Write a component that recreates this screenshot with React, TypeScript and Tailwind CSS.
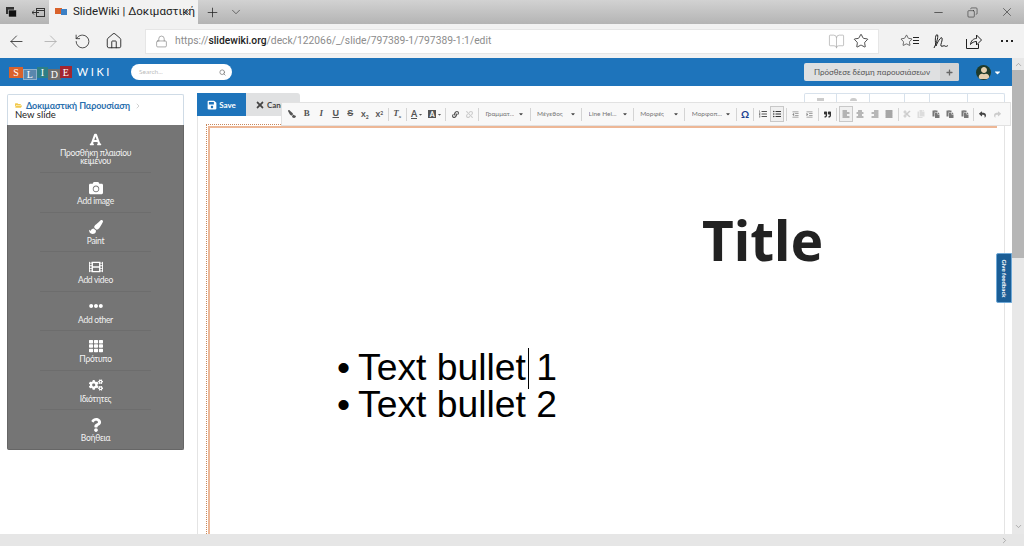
import React from "react";
import { ArrowLeft, ArrowRight, RotateCw, Home, Lock, BookOpen, Star, X, Plus, ChevronDown, Minus, Copy, Search, ChevronRight } from "lucide-react";
import { FaFont, FaCamera, FaPaintBrush, FaFilm, FaEllipsisH, FaTh, FaCogs, FaQuestion, FaSave, FaTimes, FaFolderOpen, FaPlus, FaCaretDown, FaLink, FaUnlink, FaListOl, FaListUl, FaOutdent, FaIndent, FaQuoteRight, FaAlignLeft, FaAlignCenter, FaAlignRight, FaAlignJustify, FaCut, FaCopy, FaPaste, FaReply, FaShare, FaUser } from "react-icons/fa";

const lato = { fontFamily: "Lato, sans-serif" };

function Sep() {
  return <div className="w-[3.6px] flex justify-center shrink-0"><div className="w-px h-[13px] bg-[#d4d4d4]" /></div>;
}

function Btn({ children, boxed, w }: { children: React.ReactNode; boxed?: boolean; w?: string }) {
  return (
    <div className={`${w ?? "w-[14.5px]"} h-[16px] shrink-0 flex items-center justify-center text-[#555] text-[9px] ${boxed ? "border border-[#c8c8c8] bg-[#f0f0f0]" : ""}`}>
      {children}
    </div>
  );
}

function Combo({ label }: { label: string }) {
  return (
    <div className="w-[48px] shrink-0 flex items-center justify-between pl-[5px] pr-[4px] text-[6.5px] text-[#777]">
      <span className="whitespace-nowrap overflow-hidden">{label}</span>
      <FaCaretDown className="text-[6px] text-[#444] shrink-0" />
    </div>
  );
}

function Tool({ icon, label, h = "h-[39.5px]" }: { icon: React.ReactNode; label: React.ReactNode; h?: string }) {
  return (
    <div className={`${h} flex flex-col items-center pt-[6px] mx-[32px] border-b border-[#6d6d6d] last:border-b-0`}>
      <div className="h-[17px] flex items-center justify-center text-white text-[14px]">{icon}</div>
      <div className="text-[8.5px] leading-[7.5px] mt-[2px] text-[#f2f2f2] text-center tracking-[-0.3px] whitespace-nowrap">{label}</div>
    </div>
  );
}

export default function App() {
  return (
    <div className="w-[1024px] h-[546px] overflow-hidden flex flex-col bg-white relative" style={{ fontFamily: "'Open Sans', sans-serif" }}>
      {/* tab strip */}
      <div className="h-[24px] shrink-0 flex items-center bg-gradient-to-b from-[#d2d2d2] to-[#b4b4b4] text-[#222]">
        <div className="w-[49px] flex items-center pl-[6px] gap-[15px]">
          <svg width="11" height="11" viewBox="0 0 11 11"><rect x="0" y="0" width="8" height="7" fill="#333" /><rect x="2.5" y="3" width="8" height="7" fill="#111" stroke="#ccc" strokeWidth=".6" /></svg>
          <svg width="13" height="11" viewBox="0 0 13 11" fill="none" stroke="#333"><rect x="4.5" y="1.5" width="8" height="8" /><path d="M0 5.5h7M2 3.5l-2 2 2 2M4.5 3.5h8" /></svg>
        </div>
        <div className="w-[149px] h-[24px] bg-[#f2f2f2] flex items-center pl-[6px] shrink-0">
          <svg width="12" height="8" viewBox="0 0 12 8" className="mr-[6px] shrink-0"><rect width="7" height="6" fill="#d9622b" /><rect x="6" y="1" width="6" height="6" fill="#3b7fc4" /></svg>
          <span className="text-[11.5px] whitespace-nowrap w-[108px] shrink-0" style={{ fontFamily: "Roboto, sans-serif" }}>SlideWiki | Δοκιμαστική</span>
          <X size={12} strokeWidth={1} className="shrink-0" />
        </div>
        <Plus size={15} strokeWidth={1.2} className="ml-[7px]" />
        <ChevronDown size={14} strokeWidth={1} className="ml-[9px]" />
        <div className="ml-auto flex items-center gap-[22px] pr-[10px]">
          <Minus size={13} strokeWidth={1.2} />
          <Copy size={11} strokeWidth={1.2} className="-scale-x-100" />
          <X size={14} strokeWidth={1} />
        </div>
      </div>
      {/* nav */}
      <div className="h-[34px] shrink-0 flex items-center bg-[#f2f2f2] text-[#222]">
        <ArrowLeft size={19} strokeWidth={1} className="ml-[7px]" />
        <ArrowRight size={19} strokeWidth={1} className="ml-[15px] text-[#aaa]" />
        <RotateCw size={17} strokeWidth={1.1} className="ml-[14px] -scale-x-100" />
        <Home size={18} strokeWidth={1.2} className="ml-[14px]" />
        <div className="ml-[22px] w-[734px] h-[25px] bg-white border border-[#e6e6e6] flex items-center pl-[9px] pr-[9px]">
          <Lock size={13} strokeWidth={1} className="text-[#666]" />
          <span className="ml-[7px] text-[10.3px] text-[#8c8c8c] whitespace-nowrap" style={{ fontFamily: "Roboto, sans-serif" }}>https://<span className="text-[#222] font-medium">slidewiki.org</span>/deck/122066/_/slide/797389-1/797389-1:1/edit</span>
          <BookOpen size={17} strokeWidth={1} className="ml-auto text-[#aaa]" />
          <Star size={16} strokeWidth={1.2} className="ml-[8px]" />
        </div>
        <div className="relative ml-[21px] w-[16px] h-[16px]">
          <Star size={13} strokeWidth={1.2} className="absolute left-0 top-[1px]" />
          <div className="absolute right-[-3px] top-[4px] w-[6px] h-px bg-[#222]" />
          <div className="absolute right-[-3px] top-[7px] w-[6px] h-px bg-[#222]" />
          <div className="absolute right-[-3px] top-[10px] w-[6px] h-px bg-[#222]" />
        </div>
        <svg width="17" height="17" viewBox="0 0 17 17" fill="none" stroke="#222" className="ml-[16px]"><path d="M2 15C5 9 7 2 5 1.5 3 2 3 9 4 13c1-3 5-10 6-8S8 12 9 13c1 1 3-1 4 0s2 0 3-.5" /></svg>
        <svg width="17" height="17" viewBox="0 0 17 17" fill="none" stroke="#222" className="ml-[16px]"><path d="M1.5 6v9.500h12V11" /><path d="M5.500 11.500c.5-4 3-6 6-6V2l5 5-5 5V8.500c-2.500 0-4.500 1-6 3z" /></svg>
        <div className="ml-[19px] flex gap-[3px]">
          <div className="w-[2px] h-[2px] bg-[#222]" /><div className="w-[2px] h-[2px] bg-[#222]" /><div className="w-[2px] h-[2px] bg-[#222]" />
        </div>
      </div>
      {/* page */}
      <div className="flex-1 flex min-h-0">
        <div className="flex-1 flex flex-col min-w-0">
          <div className="h-[28px] shrink-0 bg-[#1e74bb] flex items-center pl-[9px] pr-[10px]">
            <div className="flex items-center h-[16px] w-[103px] relative text-[10px] text-white" style={{ fontFamily: "'Liberation Serif', serif" }}>
              <div className="w-[14px] h-[11px] bg-[#d9622b] flex items-center justify-center">S</div>
              <div className="w-[14px] h-[11px] mt-[4px] bg-[#5a87ad] border border-[#8eb0cc] flex items-center justify-center">L</div>
              <div className="w-[11px] h-[11px] bg-[#2d7f86] flex items-center justify-center">I</div>
              <div className="w-[13px] h-[11px] mt-[4px] bg-[#6d6d6d] flex items-center justify-center">D</div>
              <div className="w-[12px] h-[12px] -ml-[1px] bg-[#a3252f] flex items-center justify-center">E</div>
              <span className="ml-[5px] text-[11px] tracking-[2.6px]" style={lato}>WIKI</span>
            </div>
            <div className="ml-[19px] w-[101px] h-[16px] bg-white rounded-full flex items-center pl-[8px] pr-[6px] text-[6.5px] text-[#bbb]" style={lato}>
              Search...
              <Search size={7} strokeWidth={2.5} className="ml-auto text-[#777]" />
            </div>
            <div className="ml-auto w-[155px] h-[18px] rounded-[2px] bg-[#dfe0e1] flex items-center text-[8px] text-[#555]" style={lato}>
              <span className="flex-1 text-center whitespace-nowrap">Πρόσθεσε δέσμη παρουσιάσεων</span>
              <div className="w-[19px] h-full bg-[#d2d3d4] flex items-center justify-center rounded-r-[2px]"><FaPlus className="text-[7px] text-[#666]" /></div>
            </div>
            <div className="ml-[17px] w-[15px] h-[15px] rounded-full bg-[#1f3a2a] overflow-hidden flex items-center justify-center">
              <FaUser className="text-[12px] text-[#e4cfae] translate-y-[1px]" />
            </div>
            <FaCaretDown className="ml-[2px] text-[9px] text-white" />
          </div>
          <div className="flex-1 flex min-h-0 relative">
            {/* sidebar */}
            <div className="w-[197px] shrink-0 pl-[7px] pr-[13px] pt-[8px]" style={lato}>
              <div className="h-[31px] bg-white border border-[#cfdbe6] border-b-0 rounded-t-[2px] pl-[7px] pt-[6px] relative">
                <div className="flex items-center h-[9px]">
                  <FaFolderOpen className="text-[7px] text-[#f2c94c] mr-[4px]" />
                  <span className="text-[9px] font-bold text-[#2a6fad] whitespace-nowrap tracking-[-0.1px]">Δοκιμαστική Παρουσίαση</span>
                  <ChevronRight size={8} className="ml-[4px] text-[#bbb]" />
                </div>
                <div className="text-[9.5px] leading-[9px] text-[#222]">New slide</div>
              </div>
              <div className="bg-[#757575] h-[325px] rounded-b-[2px] border border-t-0 border-[#666]">
                <Tool h="h-[48px]" icon={<FaFont className="text-[13px]" />} label={<>Προσθήκη πλαισίου<br />κειμένου</>} />
                <Tool icon={<FaCamera />} label="Add image" />
                <Tool icon={<FaPaintBrush />} label="Paint" />
                <Tool icon={<FaFilm />} label="Add video" />
                <Tool icon={<FaEllipsisH />} label="Add other" />
                <Tool icon={<FaTh />} label="Πρότυπο" />
                <Tool icon={<FaCogs />} label="Ιδιότητες" />
                <Tool icon={<FaQuestion />} label="Βοήθεια" />
              </div>
            </div>
            {/* editor */}
            <div className="flex-1 flex flex-col min-w-0 pt-[7px] pr-[7px]">
              <div className="h-[23px] shrink-0 flex" style={lato}>
                <div className="w-[49px] bg-[#1e74bb] text-white text-[8px] font-bold flex items-center justify-center gap-[2px]"><FaSave className="text-[10px]" />Save</div>
                <div className="w-[54px] bg-[#e0e1e2] text-[#444] text-[8px] font-bold flex items-center pl-[9px] gap-[2px] rounded-tr-[3px]"><FaTimes className="text-[10px]" />Cancel</div>
                <div className="ml-auto w-[201px] h-[23px] border border-b-0 border-[#d8e2ec] rounded-t-[2px] flex text-[#aaa]">
                  <div className="w-[32px] border-r border-[#d8e2ec] flex justify-center pt-[4px]"><div className="w-[7px] h-[3px] bg-[#ccc]" /></div>
                  <div className="w-[33px] border-r border-[#d8e2ec] flex justify-center pt-[4px]"><div className="w-[7px] h-[3px] rounded-t-full bg-[#ccc]" /></div>
                  <div className="w-[35px] border-r border-[#d8e2ec]" />
                  <div className="w-[25px] border-r border-[#d8e2ec]" />
                  <div className="w-[38px] border-r border-[#d8e2ec]" />
                  <div className="flex-1" />
                </div>
              </div>
              <div className="flex-1 border-x border-[#e4e4e4] pl-[8px] pr-[7px] pt-[8px] min-h-0 flex">
                <div className="flex-1 border-l border-t border-dotted border-[#c9875a] pl-px pt-px">
                  <div className="h-full border-l-2 border-t-2 border-[#edb796] relative">
                    <div className="absolute left-[492px] top-[82px] text-[55px] leading-[60px] font-bold text-[#222] whitespace-nowrap" style={{ fontFamily: "'Noto Sans', sans-serif" }}>Title</div>
                    <div className="absolute left-[127px] top-[221px] text-[37.300px] leading-[37px] text-black whitespace-nowrap" style={{ fontFamily: "'Liberation Sans', sans-serif" }}>
                      <div className="relative"><span className="inline-block w-[21px]">•</span>Text bullet 1<div className="absolute left-[191px] top-[-1px] w-px h-[41px] bg-black" /></div>
                      <div><span className="inline-block w-[21px]">•</span>Text bullet 2</div>
                    </div>
                  </div>
                </div>
              </div>
            </div>
            {/* ckeditor floating toolbar */}
            <div className="absolute left-[281px] top-[16px] w-[730px] h-[24px] bg-[#f8f8f8] border border-[#e2e2e2] flex items-center pl-[3px]" style={lato}>
              <Btn><FaPaintBrush className="text-[8px] -scale-x-100" /></Btn>
              <Btn><b style={{ fontFamily: "'Liberation Serif', serif" }}>B</b></Btn>
              <Btn><i className="font-bold" style={{ fontFamily: "'Liberation Serif', serif" }}>I</i></Btn>
              <Btn><u className="font-bold" style={{ fontFamily: "'Liberation Sans', sans-serif" }}>U</u></Btn>
              <Btn><s className="font-bold" style={{ fontFamily: "'Liberation Sans', sans-serif" }}>S</s></Btn>
              <Btn><span className="font-bold">x<sub className="text-[5px]">2</sub></span></Btn>
              <Btn><span className="font-bold">x<sup className="text-[5px]">2</sup></span></Btn>
              <Sep />
              <Btn><i className="font-bold" style={{ fontFamily: "'Liberation Serif', serif" }}>T<sub className="text-[5px]">x</sub></i></Btn>
              <Sep />
              <Btn w="w-[18px]"><u className="font-bold no-underline border-b border-[#555] leading-[9px]">A</u><FaCaretDown className="text-[5px] ml-px" /></Btn>
              <Btn w="w-[18px]"><span className="bg-[#555] text-white w-[8px] h-[8px] flex items-center justify-center text-[7px] font-bold">A</span><FaCaretDown className="text-[5px] ml-px" /></Btn>
              <Sep />
              <Btn><FaLink className="text-[7px]" /></Btn>
              <Btn><FaUnlink className="text-[7px] text-[#ccc]" /></Btn>
              <Sep />
              <Combo label="Γραμματ..." />
              <Sep />
              <Combo label="Μέγεθος" />
              <Sep />
              <Combo label="Line Hei..." />
              <Sep />
              <Combo label="Μορφές" />
              <Sep />
              <Combo label="Μορφοπ..." />
              <Sep />
              <Btn w="w-[13.5px]"><span className="text-[#1b3f8f] font-bold text-[10px]">Ω</span></Btn>
              <Sep />
              <Btn><FaListOl className="text-[8px]" /></Btn>
              <Btn boxed><FaListUl className="text-[8px] text-[#333]" /></Btn>
              <Sep />
              <Btn><FaOutdent className="text-[7px] text-[#888]" /></Btn>
              <Btn><FaIndent className="text-[7px] text-[#888]" /></Btn>
              <Sep />
              <Btn><FaQuoteRight className="text-[7px] text-[#333]" /></Btn>
              <Sep />
              <Btn boxed><FaAlignLeft className="text-[8px] text-[#777]" /></Btn>
              <Btn><FaAlignCenter className="text-[8px] text-[#777]" /></Btn>
              <Btn><FaAlignRight className="text-[8px] text-[#777]" /></Btn>
              <Btn><FaAlignJustify className="text-[8px] text-[#555]" /></Btn>
              <Sep />
              <Btn w="w-[13.5px]"><FaCut className="text-[8px] text-[#ccc]" /></Btn>
              <Btn><FaCopy className="text-[8px] text-[#ddd]" /></Btn>
              <Btn><FaPaste className="text-[8px] text-[#777]" /></Btn>
              <Btn><FaPaste className="text-[8px] text-[#777]" /></Btn>
              <Btn><FaPaste className="text-[8px] text-[#777]" /></Btn>
              <Sep />
              <Btn><FaReply className="text-[7px] text-[#444]" /></Btn>
              <Btn><FaShare className="text-[7px] text-[#ccc]" /></Btn>
            </div>
            {/* feedback tab */}
            <div className="absolute right-0 top-[167px] w-[16px] h-[50px] bg-[#1b5e96] border border-[#6fa8d6] rounded-l-[2px] flex items-center justify-center">
              <span className="text-[6px] font-bold text-white whitespace-nowrap rotate-90" style={lato}>Give feedback</span>
            </div>
          </div>
        </div>
        {/* vertical scrollbar */}
        <div className="w-[12px] shrink-0 bg-[#e8e8e8] flex flex-col items-center">
          <div className="h-[12px] w-full flex items-center justify-center"><ChevronDown size={9} className="rotate-180 text-[#999]" /></div>
          <div className="w-full h-[188px] bg-[#b6b6b6]" />
          <div className="flex-1" />
          <div className="h-[24px] w-full flex justify-center"><ChevronDown size={9} className="text-[#999]" /></div>
        </div>
      </div>
      {/* horizontal scrollbar */}
      <div className="absolute left-0 right-0 bottom-0 h-[12px] bg-[#e6e6e6] flex items-center justify-end pr-[15px]">
        <ChevronRight size={9} className="text-[#999]" />
      </div>
    </div>
  );
}
